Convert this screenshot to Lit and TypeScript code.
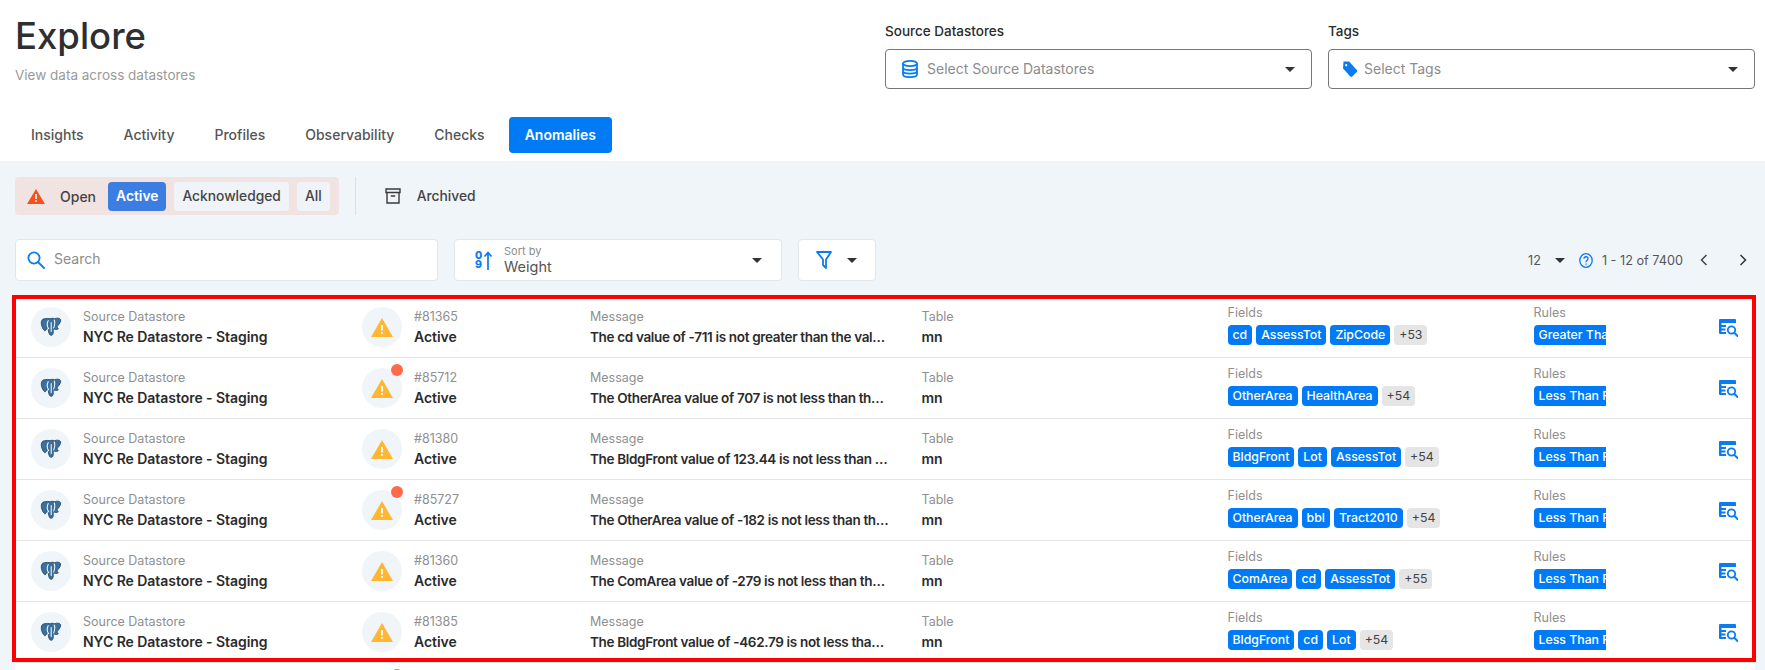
import { LitElement, html, css, svg } from 'lit';
import { customElement } from 'lit/decorators.js';

const BLUE = '#0a7cf0';

const caret = html`<svg class="caret" width="10" height="5" viewBox="0 0 10 5"><path d="M0 0h10L5 5z" fill="#333" /></svg>`;

const elephant = html`<svg class="pg" width="22" height="22" viewBox="0 0 24 24">
  <path d="M5 3C2 3 1 6 1.500 9 2 12 3.500 15 5 16c1 .5 2-1 2.500-3H9c0 3 .5 7 2.500 8 2 .5 3-1 3-4 0-2 0-3 .5-3 2 1 4 1 5 0-1-1-1.500-2-1-3 2-2 4-5 3.500-7-1-2-4.500-2-6.500-1-2-.8-4-.5-5 0-2-.5-4-.5-6 0z" fill="#3a6f9e" stroke="#2b4f70" stroke-width="1" />
  <path d="M9 5c-1.500 3-1 7 .5 9M15.500 4.500c1.500 2.500.5 5.500-.5 8.500M12.200 7v10" fill="none" stroke="#fff" stroke-width="1.100" stroke-linecap="round" />
</svg>`;

const warn = html`<svg width="22" height="19" viewBox="0 0 22 19">
  <path d="M11 0l11 19H0z" fill="#ffb733" />
  <path d="M10.100 7h1.800v5.500h-1.800zM10.100 14h1.800v1.800h-1.800z" fill="#fff" />
</svg>`;

const lens = svg`<circle cx="12.500" cy="11" r="3.700" fill="#fff" stroke="${BLUE}" stroke-width="1.800" /><path d="M15.500 14l3 3" stroke="${BLUE}" stroke-width="2" stroke-linecap="round" />`;

const eqIcon = html`<svg class="eq" width="19" height="18" viewBox="0 0 19 18">
  <path d="M1 0h15a1 1 0 0 1 1 1v3H0V1a1 1 0 0 1 1-1z" fill="${BLUE}" />
  <path d="M0 4h2.500v2H7v2H2.500v1.500H6.500v2h-4V13H7v2H1a1 1 0 0 1-1-1z" fill="${BLUE}" />
  ${lens}
</svg>`;

type Row = { id: number; dot: boolean; msg: string; fields: string[]; more: number; rule: string };

const rows: Row[] = [
  { id: 81365, dot: false, msg: 'The cd value of -711 is not greater than the value of the other field', fields: ['cd', 'AssessTot', 'ZipCode'], more: 53, rule: 'Greater Than Field' },
  { id: 85712, dot: true, msg: 'The OtherArea value of 707 is not less than the value of the other field', fields: ['OtherArea', 'HealthArea'], more: 54, rule: 'Less Than Field' },
  { id: 81380, dot: false, msg: 'The BldgFront value of 123.44 is not less than the value of the other field', fields: ['BldgFront', 'Lot', 'AssessTot'], more: 54, rule: 'Less Than Field' },
  { id: 85727, dot: true, msg: 'The OtherArea value of -182 is not less than the value of the other field', fields: ['OtherArea', 'bbl', 'Tract2010'], more: 54, rule: 'Less Than Field' },
  { id: 81360, dot: false, msg: 'The ComArea value of -279 is not less than the value of the other field', fields: ['ComArea', 'cd', 'AssessTot'], more: 55, rule: 'Less Than Field' },
  { id: 81385, dot: false, msg: 'The BldgFront value of -462.79 is not less than the value of the other field', fields: ['BldgFront', 'cd', 'Lot'], more: 54, rule: 'Less Than Field' },
  { id: 85730, dot: true, msg: 'The OtherArea value of 120 is not less than the value of the other field', fields: ['OtherArea', 'cd'], more: 54, rule: 'Less Than Field' },
];

@customElement('app-root')
export class AppRoot extends LitElement {
  static styles = css`
    :host {
      display: flex;
      flex-direction: column;
      height: 670px;
      overflow: hidden;
      background: #fff;
      font-family: Inter, 'Noto Sans', sans-serif;
      font-size: 14px;
      color: #2b2b2b;
    }
    .top {
      display: flex;
      flex: none;
      justify-content: space-between;
      height: 117px;
      padding: 14px 10px 0 15px;
      box-sizing: border-box;
    }
    h1 {
      margin: 0;
      font-size: 36.5px;
      line-height: 44px;
      font-weight: 500;
      color: #2f2f2f;
    }
    .sub {
      margin-top: 7px;
      font-size: 13.5px;
      line-height: 20px;
      color: #9a9a9a;
    }
    .selects {
      display: flex;
      gap: 16px;
      padding-top: 8px;
    }
    .sel-label {
      font-size: 13.5px;
      line-height: 18px;
      font-weight: 500;
      margin-bottom: 9px;
    }
    .sel {
      display: flex;
      align-items: center;
      width: 427px;
      height: 40px;
      box-sizing: border-box;
      border: 1px solid #777;
      border-radius: 4px;
      padding: 0 16px 0 15px;
      gap: 8px;
      color: #8c8c8c;
      font-size: 14px;
    }
    .sel span { padding-bottom: 2px; }
    .sel .caret { margin-left: auto; }
    .tags { padding-left: 12px; gap: 5px; }
    .tabs {
      display: flex;
      flex: none;
      gap: 8px;
      padding: 0 0 8px 15px;
    }
    .tab {
      padding: 0 16px;
      height: 36px;
      line-height: 36px;
      border-radius: 4px;
      font-weight: 500;
      color: #555;
    }
    .tab.on { background: #007bf5; color: #fff; font-weight: 600; }
    .main {
      flex: 1;
      min-height: 0;
      background: #f0f5fa;
      padding: 16px 10px 0 15px;
    }
    .status {
      display: flex;
      align-items: center;
      height: 38px;
    }
    .open {
      display: flex;
      align-items: center;
      height: 38px;
      box-sizing: border-box;
      background: #f2e3e3;
      border-radius: 4px;
      padding: 0 9px 0 12px;
    }
    .open-label { margin: 0 12px 0 15px; font-weight: 500; color: #444; }
    .pill {
      height: 29px;
      line-height: 29px;
      padding: 0 8px;
      margin-right: 8px;
      background: #f0f4f8;
      border-radius: 4px;
      font-size: 13.8px;
      font-weight: 500;
      color: #444;
    }
    .pill:last-child { margin-right: 0; }
    .pill.on { background: #3b7de0; color: #fff; font-weight: 600; }
    .divider { width: 1px; height: 38px; background: #dcdfe3; margin: 0 29px 0 16px; }
    .archived { margin-left: 16px; font-size: 13.8px; font-weight: 500; color: #444; }
    .toolbar {
      display: flex;
      align-items: center;
      gap: 16px;
      margin-top: 24px;
      height: 42px;
    }
    .box {
      display: flex;
      align-items: center;
      height: 42px;
      box-sizing: border-box;
      background: #fff;
      border: 1px solid #e3e7ec;
      border-radius: 4px;
    }
    .search { width: 423px; padding-left: 11px; gap: 9px; color: #8c8c8c; }
    .search span { padding-bottom: 3px; }
    .sort { width: 328px; padding: 0 19px 0 20px; }
    .sort .caret { margin-left: auto; }
    .sort-text { margin-left: 11px; }
    .sort-by { font-size: 11px; line-height: 13px; color: #8c8c8c; }
    .sort-val { font-size: 14.5px; line-height: 17px; color: #555; }
    .digits {
      display: flex;
      flex-direction: column;
      width: 8px;
      font-size: 10.5px;
      line-height: 9px;
      font-weight: 800;
      color: #0a7cf0;
    }
    .filter { width: 78px; padding-left: 17px; gap: 15px; }
    .pager {
      display: flex;
      align-items: center;
      margin-left: auto;
      color: #555;
      font-size: 12.7px;
      height: 42px;
    }
    .pager .caret { margin: 0 0 0 14px; }
    .pager .help { margin: 0 9px 0 14px; }
    .pager .prev { margin: 0 31px 0 17px; }
    .pager .next { margin-right: 8px; }
    .wrap { position: relative; margin-top: 16px; }
    .frame {
      position: absolute;
      top: -2px;
      left: -3px;
      width: 1744px;
      height: 367px;
      box-sizing: border-box;
      border: 4px solid #f00;
      pointer-events: none;
    }
    .list { background: #fff; height: 400px; }
    .row {
      display: grid;
      grid-template-columns: 331px 228px 331.5px 306px 306px 185px auto;
      height: 60px;
      padding-left: 16px;
      border-bottom: 1px solid #e2e5e8;
    }
    .cell { display: flex; align-items: flex-start; min-width: 0; }
    .avatar {
      position: relative;
      display: flex;
      align-items: center;
      justify-content: center;
      flex: none;
      width: 40px;
      height: 40px;
      margin: 10px 12px 0 0;
      border-radius: 50%;
      background: #f0f5fa;
    }
    .dot {
      position: absolute;
      top: -4px;
      right: -1px;
      width: 12px;
      height: 12px;
      border-radius: 50%;
      background: #ff6b4a;
    }
    .text { padding-top: 12px; min-width: 0; }
    .lbl { font-size: 12.5px; line-height: 16px; color: #8f8f8f; }
    .val {
      margin-top: 2px;
      font-size: 14px;
      line-height: 20px;
      font-weight: 600;
      letter-spacing: -0.05px;
      color: #2b2b2b;
      white-space: nowrap;
    }
    .msg {
      max-width: 300px;
      overflow: hidden;
      text-overflow: ellipsis;
      font-size: 13.5px;
      letter-spacing: -0.33px;
    }
    .chips-col { padding-top: 8px; min-width: 0; }
    .chips { display: flex; gap: 4px; margin-top: 4px; }
    .chip {
      flex: none;
      height: 20px;
      line-height: 20px;
      padding: 0 5px;
      border-radius: 4px;
      background: #007bf5;
      color: #fff;
      font-size: 12.3px;
      font-weight: 500;
      white-space: nowrap;
    }
    .chip.more { background: #e5e5e5; color: #444; font-weight: 400; }
    .clip { width: 72px; overflow: hidden; }
    .eq { margin-top: 22px; }
  `;

  private renderRow(r: Row) {
    return html`
      <div class="row">
        <div class="cell">
          <div class="avatar">${elephant}</div>
          <div class="text">
            <div class="lbl">Source Datastore</div>
            <div class="val">NYC Re Datastore - Staging</div>
          </div>
        </div>
        <div class="cell">
          <div class="avatar">${warn}${r.dot ? html`<span class="dot"></span>` : ''}</div>
          <div class="text">
            <div class="lbl">#${r.id}</div>
            <div class="val">Active</div>
          </div>
        </div>
        <div class="cell">
          <div class="text">
            <div class="lbl">Message</div>
            <div class="val msg">${r.msg}</div>
          </div>
        </div>
        <div class="cell">
          <div class="text">
            <div class="lbl">Table</div>
            <div class="val">mn</div>
          </div>
        </div>
        <div class="chips-col">
          <div class="lbl">Fields</div>
          <div class="chips">
            ${r.fields.map((f) => html`<span class="chip">${f}</span>`)}
            <span class="chip more">+${r.more}</span>
          </div>
        </div>
        <div class="chips-col">
          <div class="lbl">Rules</div>
          <div class="chips clip"><span class="chip">${r.rule}</span></div>
        </div>
        <div class="cell">${eqIcon}</div>
      </div>
    `;
  }

  render() {
    return html`
      <div class="top">
        <div>
          <h1>Explore</h1>
          <div class="sub">View data across datastores</div>
        </div>
        <div class="selects">
          <div>
            <div class="sel-label">Source Datastores</div>
            <div class="sel">
              <svg width="18" height="18" viewBox="0 0 18 18" fill="none" stroke="${BLUE}" stroke-width="1.800">
                <ellipse cx="9" cy="3.500" rx="7" ry="2.600" />
                <path d="M2 3.500v11c0 1.500 3 2.600 7 2.600s7-1.100 7-2.600v-11M2 7.500c0 1.500 3 2.600 7 2.600s7-1.100 7-2.600M2 11c0 1.500 3 2.600 7 2.600s7-1.100 7-2.600" />
              </svg>
              <span>Select Source Datastores</span> ${caret}
            </div>
          </div>
          <div>
            <div class="sel-label">Tags</div>
            <div class="sel tags">
              <svg width="18" height="18" viewBox="0 0 18 18">
                <path d="M2.500 1.500h5.600L15.800 10a1.400 1.400 0 0 1 0 1.900l-4.600 4.600a1.400 1.400 0 0 1-1.900 0L2 8.500z M5.200 4a1.100 1.100 0 1 0 .01 0z" fill="${BLUE}" fill-rule="evenodd" />
              </svg>
              <span>Select Tags</span> ${caret}
            </div>
          </div>
        </div>
      </div>

      <div class="tabs">
        ${['Insights', 'Activity', 'Profiles', 'Observability', 'Checks'].map((t) => html`<div class="tab">${t}</div>`)}
        <div class="tab on">Anomalies</div>
      </div>

      <div class="main">
        <div class="status">
          <div class="open">
            <svg width="18" height="15" viewBox="0 0 18 15">
              <path d="M9 0l9 15H0z" fill="#f4511e" />
              <path d="M8.200 5h1.600v5H8.200zM8.200 11.200h1.600v1.600H8.200z" fill="#fff" />
            </svg>
            <span class="open-label">Open</span>
            <span class="pill on">Active</span>
            <span class="pill">Acknowledged</span>
            <span class="pill">All</span>
          </div>
          <div class="divider"></div>
          <svg width="16" height="16" viewBox="0 0 16 16" fill="none" stroke="#3a3a3a" stroke-width="1.400">
            <path d="M1 1h14v3.500H1zM2 4.500V15h12V4.500M5.800 8h4.400" />
          </svg>
          <span class="archived">Archived</span>
        </div>

        <div class="toolbar">
          <div class="box search">
            <svg width="18" height="18" viewBox="0 0 18 18" fill="none" stroke="${BLUE}" stroke-width="1.800">
              <circle cx="7" cy="7" r="5.600" />
              <path d="M11 11l6 6" stroke-linecap="round" />
            </svg>
            <span>Search</span>
          </div>
          <div class="box sort">
            <div class="digits"><span>0</span><span>9</span></div>
            <svg width="10" height="19" viewBox="0 0 10 19">
              <path d="M5 19V2M1.500 5.500L5 1.500l3.500 4" fill="none" stroke="${BLUE}" stroke-width="1.700" />
            </svg>
            <div class="sort-text">
              <div class="sort-by">Sort by</div>
              <div class="sort-val">Weight</div>
            </div>
            ${caret}
          </div>
          <div class="box filter">
            <svg width="16" height="18" viewBox="0 0 16 18" fill="none" stroke="${BLUE}" stroke-width="1.800">
              <path d="M1 1h14L10 8.500V17l-3-3V8.500z" stroke-linejoin="round" />
            </svg>
            ${caret}
          </div>
          <div class="pager">
            <span>12</span>
            ${caret}
            <svg class="help" width="14" height="15" viewBox="0 0 14 15" fill="none" stroke="${BLUE}" stroke-width="1.300">
              <ellipse cx="7" cy="7.500" rx="6.200" ry="6.800" />
              <path d="M5 5.700c0-2.600 4-2.600 4 0 0 1.600-2 1.600-2 3.500M7 10.500v1.300" />
            </svg>
            <span>1 - 12 of 7400</span>
            <svg class="prev" width="8" height="12" viewBox="0 0 8 12" fill="none" stroke="#444" stroke-width="1.500"><path d="M6.500 1l-5 5 5 5" /></svg>
            <svg class="next" width="8" height="12" viewBox="0 0 8 12" fill="none" stroke="#333" stroke-width="1.500"><path d="M1.500 1l5 5-5 5" /></svg>
          </div>
        </div>

        <div class="wrap">
          <div class="list">${rows.map((r) => this.renderRow(r))}</div>
          <div class="frame"></div>
        </div>
      </div>
    `;
  }
}
